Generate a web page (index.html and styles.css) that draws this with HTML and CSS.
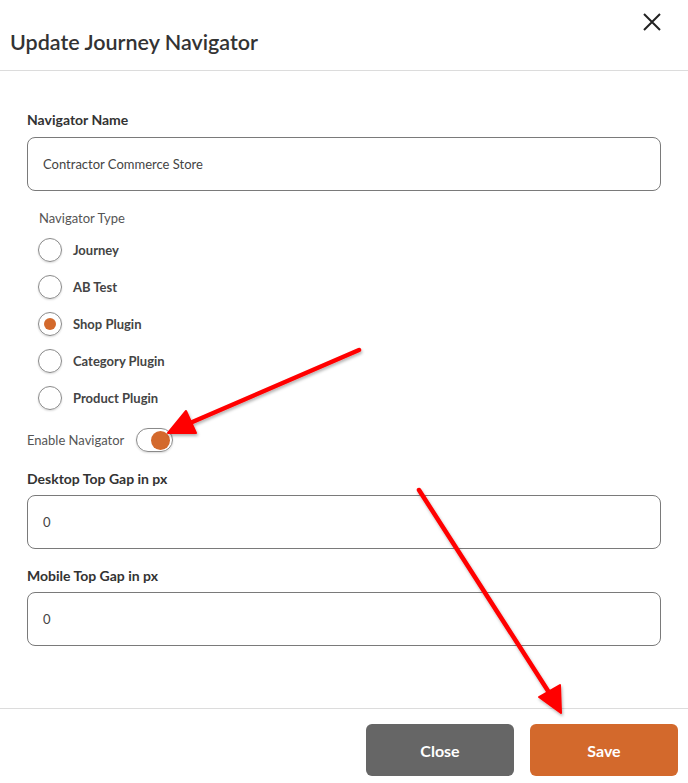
FILE: index.html
```html
<!DOCTYPE html>
<html lang="en">
<head>
    <meta charset="UTF-8">
    <meta name="viewport" content="width=device-width, initial-scale=1.0">
    <title>Update Journey Navigator</title>
    <link rel="stylesheet" href="styles.css">
</head>
<body>
    <div class="modal">
        <div class="modal-head">
            <h2 class="modal-title">Update Journey Navigator</h2>
            <button class="close-x" aria-label="close">
                <svg width="20" height="20" viewBox="0 0 20 20"><path d="M2 2 L18 18 M18 2 L2 18" stroke="#222" stroke-width="2" fill="none"/></svg>
            </button>
        </div>

        <div class="modal-body">
            <label class="field-label">Navigator Name</label>
            <div class="text-box">Contractor Commerce Store</div>

            <div class="type-label">Navigator Type</div>
            <div class="radio-row"><span class="radio"></span>Journey</div>
            <div class="radio-row"><span class="radio"></span>AB Test</div>
            <div class="radio-row"><span class="radio checked"></span>Shop Plugin</div>
            <div class="radio-row"><span class="radio"></span>Category Plugin</div>
            <div class="radio-row"><span class="radio"></span>Product Plugin</div>

            <div class="toggle-row">
                <span>Enable Navigator</span>
                <span class="toggle on"><span class="knob"></span></span>
            </div>

            <label class="field-label gap-top">Desktop Top Gap in px</label>
            <div class="text-box">0</div>

            <label class="field-label gap-top">Mobile Top Gap in px</label>
            <div class="text-box">0</div>
        </div>

        <div class="modal-foot">
            <button class="btn btn-close">Close</button>
            <button class="btn btn-save">Save</button>
        </div>

        <!-- annotation arrows -->
        <svg class="arrows" width="688" height="783" viewBox="0 0 688 783">
            <defs>
                <filter id="sh" x="-10%" y="-10%" width="120%" height="120%">
                    <feDropShadow dx="1" dy="2" stdDeviation="1.5" flood-color="#000" flood-opacity="0.3"/>
                </filter>
            </defs>
            <g filter="url(#sh)" fill="#f00" stroke="#f00">
                <line x1="359" y1="350" x2="190" y2="423" stroke-width="4.5" stroke-linecap="round"/>
                <polygon points="168,433 186,411 196,433" stroke-width="2" stroke-linejoin="round"/>
                <line x1="419" y1="490" x2="550" y2="694" stroke-width="4.5" stroke-linecap="round"/>
                <polygon points="561,713 539,697 560,685" stroke-width="2" stroke-linejoin="round"/>
            </g>
        </svg>
    </div>
</body>
</html>
```

FILE: styles.css
```css
body {
    margin: 0;
    background: #fff;
    font-family: Lato, "Open Sans", sans-serif;
    color: #333;
}

.modal {
    position: relative;
    width: 688px;
    height: 783px;
    overflow: hidden;
}

.modal-head {
    height: 70px;
    border-bottom: 1px solid #dcdcdc;
    display: flex;
    justify-content: space-between;
    align-items: flex-start;
    padding: 0 26px 0 10px;
}
.modal-title {
    margin: 28px 0 0 0;
    font-size: 21.5px;
    line-height: 28px;
    font-weight: 600;
    color: #333;
}
.close-x {
    margin-top: 12px;
    border: 0;
    background: none;
    padding: 0;
    width: 20px;
    height: 20px;
    cursor: pointer;
}

.modal-body {
    padding: 39px 27px 62px 27px;
}

.field-label {
    display: block;
    font-size: 14px;
    font-weight: 700;
    line-height: 20px;
    color: #333;
    margin-bottom: 7px;
}
.field-label.gap-top {
    margin-top: 17px;
    margin-bottom: 6px;
}

.text-box {
    height: 54px;
    box-sizing: border-box;
    border: 1px solid #7a7a7a;
    border-radius: 8px;
    padding: 0 15px;
    display: flex;
    align-items: center;
    font-size: 13px;
    color: #444;
}

.type-label {
    margin: 17px 0 3px 12px;
    font-size: 13px;
    line-height: 20px;
    color: #555;
}

.radio-row {
    height: 37px;
    display: flex;
    align-items: center;
    padding-left: 11px;
    font-size: 13px;
    font-weight: 700;
    color: #444;
}
.radio {
    width: 24px;
    height: 24px;
    box-sizing: border-box;
    border: 1px solid #8a8a8a;
    border-radius: 50%;
    margin-right: 11px;
    box-shadow: 0 1px 2px rgba(0, 0, 0, 0.15);
    display: flex;
    align-items: center;
    justify-content: center;
}
.radio.checked::after {
    content: "";
    width: 12px;
    height: 12px;
    border-radius: 50%;
    background: #d3692c;
}

.toggle-row {
    margin-top: 12px;
    height: 24px;
    display: flex;
    align-items: center;
    font-size: 13px;
    color: #555;
}
.toggle {
    margin-left: 12px;
    width: 37px;
    height: 24px;
    box-sizing: border-box;
    border: 1px solid #8a8a8a;
    border-radius: 12px;
    display: flex;
    align-items: center;
    padding: 0 2px;
    box-shadow: 0 1px 2px rgba(0, 0, 0, 0.15);
}
.toggle.on {
    justify-content: flex-end;
}
.knob {
    width: 19px;
    height: 19px;
    border-radius: 50%;
    background: #d3692c;
}

.modal-foot {
    border-top: 1px solid #dcdcdc;
    display: flex;
    justify-content: flex-end;
    gap: 16px;
    padding: 15px 10px 0 0;
}
.btn {
    width: 148px;
    height: 52px;
    border: 0;
    border-radius: 6px;
    color: #fff;
    font-family: Lato, "Open Sans", sans-serif;
    font-size: 16px;
    font-weight: 700;
    cursor: pointer;
}
.btn-close {
    background: #666;
}
.btn-save {
    background: #d3692c;
}

.arrows {
    position: absolute;
    left: 0;
    top: 0;
    pointer-events: none;
}
```
